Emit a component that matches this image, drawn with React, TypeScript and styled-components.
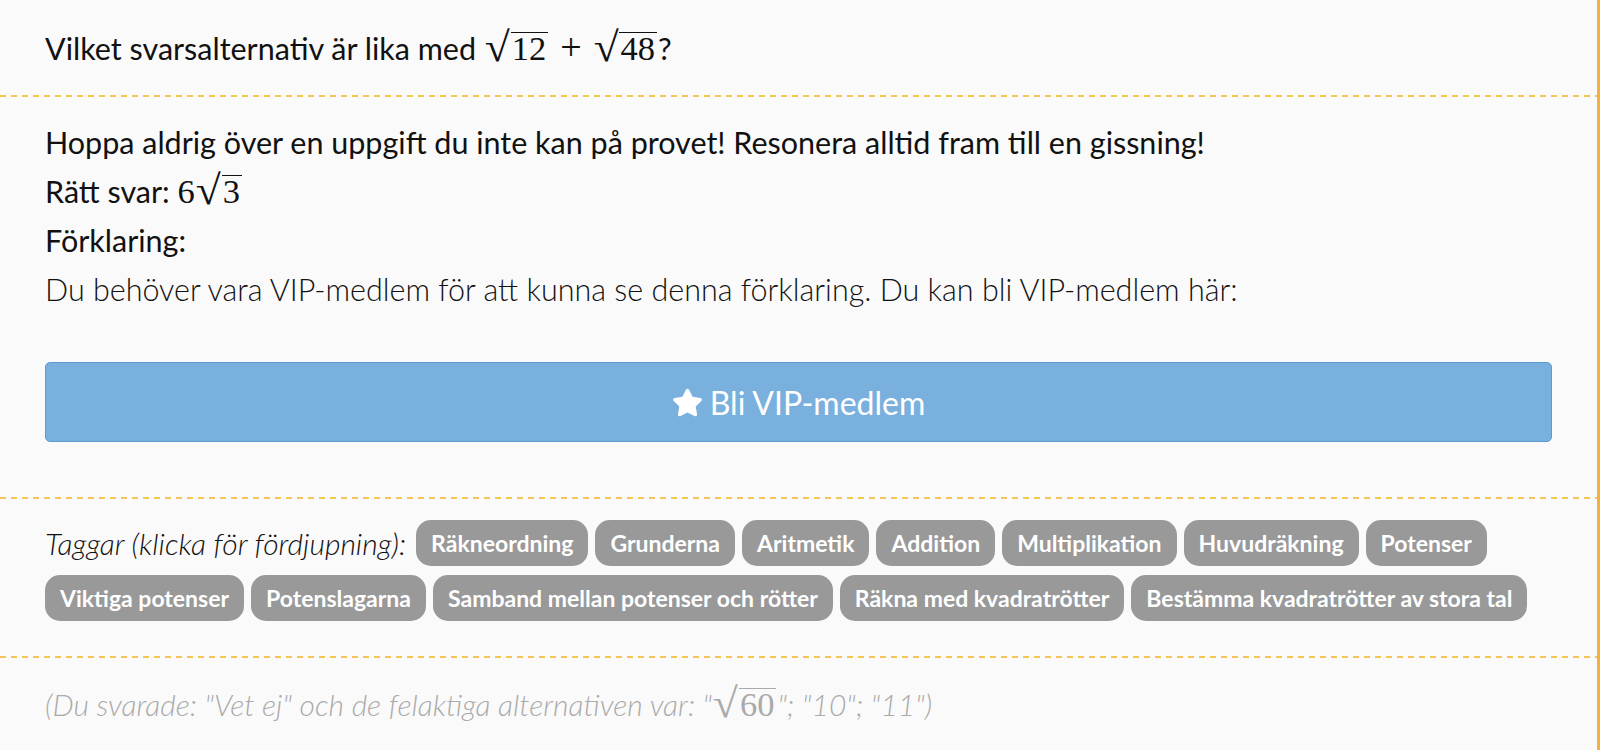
import React from 'react'
import styled, {createGlobalStyle} from 'styled-components'
import {FaStar} from 'react-icons/fa'

const GlobalStyle = createGlobalStyle`
  html, body {
    margin: 0;
    padding: 0;
    background: #fafafa;
  }
  body {
    font-family: Lato, 'Open Sans', sans-serif;
    color: #111;
  }
`

const tags = [
  'Räkneordning',
  'Grunderna',
  'Aritmetik',
  'Addition',
  'Multiplikation',
  'Huvudräkning',
  'Potenser',
  'Viktiga potenser',
  'Potenslagarna',
  'Samband mellan potenser och rötter',
  'Räkna med kvadratrötter',
  'Bestämma kvadratrötter av stora tal',
]

const Radical: React.FC<{children: React.ReactNode}> = ({children}) => (
  <MathWrap>
    <RootSign>√</RootSign>
    <Radicand>{children}</Radicand>
  </MathWrap>
)

const App: React.FC = () => {
  return (
    <>
      <GlobalStyle />
      <Panel>
        <Question>
          Vilket svarsalternativ är lika med <Radical>12</Radical>
          <MathOp>+</MathOp>
          <Radical>48</Radical>?
        </Question>
        <Divider />
        <AnswerSection>
          <Line>Hoppa aldrig över en uppgift du inte kan på provet! Resonera alltid fram till en gissning!</Line>
          <Line>
            Rätt svar: <MathNum>6</MathNum>
            <Radical>3</Radical>
          </Line>
          <Line>Förklaring:</Line>
          <LightLine>
            Du behöver vara VIP-medlem för att kunna se denna förklaring. Du kan bli VIP-medlem här:
          </LightLine>
          <VipButton>
            <FaStar size={31} />
            Bli VIP-medlem
          </VipButton>
        </AnswerSection>
        <Divider />
        <TagSection>
          <TagLabel>Taggar (klicka för fördjupning):</TagLabel>
          {tags.map((tag) => (
            <Tag key={tag}>{tag}</Tag>
          ))}
        </TagSection>
        <Divider />
        <Footer>
          (Du svarade: "Vet ej" och de felaktiga alternativen var: "<Radical>60</Radical>"; "10"; "11")
        </Footer>
      </Panel>
    </>
  )
}

export default App

const Panel = styled.div`
  min-height: 100vh;
  box-sizing: border-box;
  border-right: 3px solid #f3b043;
  background: #fafafa;
`

const Divider = styled.div`
  height: 2px;
  background-image: repeating-linear-gradient(
    to right,
    #f4c654 0,
    #f4c654 6px,
    transparent 6px,
    transparent 11px
  );
`

const Question = styled.div`
  height: 95px;
  box-sizing: border-box;
  padding: 28px 45px 0;
  font-size: 30.5px;
  line-height: 40px;
  white-space: nowrap;
`

const MathWrap = styled.span`
  font-family: 'Liberation Serif', 'Times New Roman', serif;
  font-style: normal;
  font-weight: 400;
  white-space: nowrap;
  line-height: 0;
  margin: 0 1px 0 2px;
`

const RootSign = styled.span`
  display: inline-block;
  font-size: 38px;
  line-height: 0;
  transform: scale(1.2, 1.1);
  transform-origin: 100% 80%;
  margin-left: 3px;
  margin-right: 1px;
`

const Radicand = styled.span`
  display: inline-block;
  border-top: 1.6px solid currentColor;
  padding: 1px 2px 0 1px;
  font-size: 34.5px;
  line-height: 28px;
`

const MathOp = styled.span`
  font-family: 'Liberation Serif', 'Times New Roman', serif;
  font-size: 38px;
  line-height: 0;
  margin: 0 11px;
`

const MathNum = styled.span`
  font-family: 'Liberation Serif', 'Times New Roman', serif;
  font-size: 34.5px;
  line-height: 0;
`

const AnswerSection = styled.div`
  padding: 21px 45px 55px;
  display: flex;
  flex-direction: column;
`

const Line = styled.div`
  font-size: 30.5px;
  line-height: 49px;
  height: 49px;
  white-space: nowrap;
`

const LightLine = styled(Line)`
  font-weight: 300;
`

const VipButton = styled.button`
  margin-top: 48px;
  height: 80px;
  width: 100%;
  display: flex;
  align-items: center;
  justify-content: center;
  gap: 7px;
  background: #7ab0de;
  border: 1px solid #5d9bd3;
  border-radius: 5px;
  color: #fff;
  font-family: Lato, sans-serif;
  font-size: 32px;
  cursor: pointer;
`

const TagSection = styled.div`
  padding: 21px 45px 35px;
  display: flex;
  flex-wrap: wrap;
  align-items: center;
  gap: 9px 7px;
`

const TagLabel = styled.span`
  font-size: 30px;
  font-style: italic;
  font-weight: 300;
  margin-right: 3px;
`

const Tag = styled.a`
  display: inline-flex;
  align-items: center;
  height: 46px;
  padding: 0 15px;
  border-radius: 15px;
  background: #999;
  color: #fff;
  font-size: 23px;
  font-weight: 700;
  cursor: pointer;
`

const Footer = styled.div`
  height: 90px;
  box-sizing: border-box;
  padding: 26px 45px 0;
  font-size: 30px;
  line-height: 40px;
  font-style: italic;
  font-weight: 300;
  color: #aaa;
`
